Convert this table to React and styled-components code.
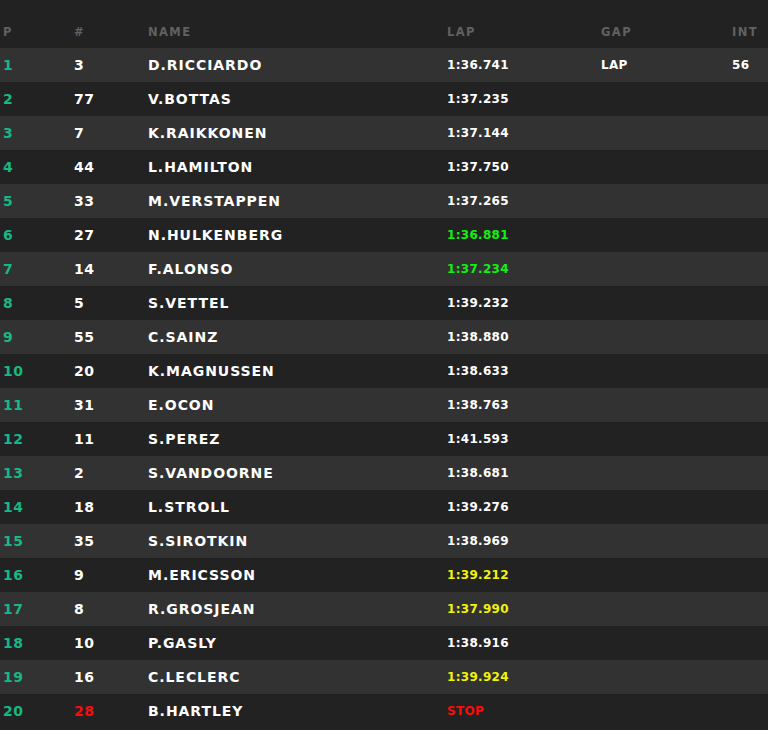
import React from "react";
import styled, { createGlobalStyle } from "styled-components";

const Global = createGlobalStyle`
  html, body { margin: 0; padding: 0; background: #222222; }
  body { font-family: "DejaVu Sans", "Liberation Sans", sans-serif; }
`;

const cols = "71px 74px 299px 154px 131px 1fr";

const Board = styled.div`
  width: 768px;
  background: #222222;
`;

const Header = styled.div`
  display: grid;
  grid-template-columns: ${cols};
  height: 48px;
  align-items: end;
  padding: 0 0 10px 3px;
  box-sizing: border-box;
`;

const HeadCell = styled.div`
  font-family: "DejaVu Sans", sans-serif;
  font-weight: 700;
  font-size: 11.5px;
  letter-spacing: 1.4px;
  color: #616161;
  line-height: 12px;
`;

const Row = styled.div`
  display: grid;
  grid-template-columns: ${cols};
  height: 34px;
  align-items: center;
  padding-left: 3px;
  background: ${(p) => (p.$odd ? "#323232" : "#222222")};
`;

const Pos = styled.div`
  font-weight: 700;
  font-size: 14px;
  color: #17b887;
  letter-spacing: 0.6px;
`;

const Num = styled.div`
  font-weight: 700;
  font-size: 14px;
  letter-spacing: 0.6px;
  color: ${(p) => (p.$red ? "#ff0a0a" : "#ffffff")};
`;

const Name = styled.div`
  font-weight: 700;
  font-size: 14px;
  letter-spacing: 0.95px;
  color: #ffffff;
`;

const Lap = styled.div`
  font-weight: 700;
  font-size: 12px;
  letter-spacing: 0.3px;
  color: ${(p) => p.$color || "#ffffff"};
`;

const drivers = [
  ["3", "D.RICCIARDO", "1:36.741", "", "LAP", "56"],
  ["77", "V.BOTTAS", "1:37.235"],
  ["7", "K.RAIKKONEN", "1:37.144"],
  ["44", "L.HAMILTON", "1:37.750"],
  ["33", "M.VERSTAPPEN", "1:37.265"],
  ["27", "N.HULKENBERG", "1:36.881", "g"],
  ["14", "F.ALONSO", "1:37.234", "g"],
  ["5", "S.VETTEL", "1:39.232"],
  ["55", "C.SAINZ", "1:38.880"],
  ["20", "K.MAGNUSSEN", "1:38.633"],
  ["31", "E.OCON", "1:38.763"],
  ["11", "S.PEREZ", "1:41.593"],
  ["2", "S.VANDOORNE", "1:38.681"],
  ["18", "L.STROLL", "1:39.276"],
  ["35", "S.SIROTKIN", "1:38.969"],
  ["9", "M.ERICSSON", "1:39.212", "y"],
  ["8", "R.GROSJEAN", "1:37.990", "y"],
  ["10", "P.GASLY", "1:38.916"],
  ["16", "C.LECLERC", "1:39.924", "y"],
  ["28", "B.HARTLEY", "STOP", "r"],
];

const colorMap = { g: "#12f012", y: "#f2f20a", r: "#ff0a0a" };

export default function App() {
  return (
    <>
      <Global />
      <Board>
        <Header>
          <HeadCell>P</HeadCell>
          <HeadCell>#</HeadCell>
          <HeadCell>NAME</HeadCell>
          <HeadCell>LAP</HeadCell>
          <HeadCell>GAP</HeadCell>
          <HeadCell>INT</HeadCell>
        </Header>
        {drivers.map(([num, name, lap, c, gap, int], i) => (
          <Row key={name} $odd={i % 2 === 0}>
            <Pos>{i + 1}</Pos>
            <Num $red={c === "r"}>{num}</Num>
            <Name>{name}</Name>
            <Lap $color={colorMap[c]}>{lap}</Lap>
            <Lap>{gap || ""}</Lap>
            <Lap>{int || ""}</Lap>
          </Row>
        ))}
      </Board>
    </>
  );
}
